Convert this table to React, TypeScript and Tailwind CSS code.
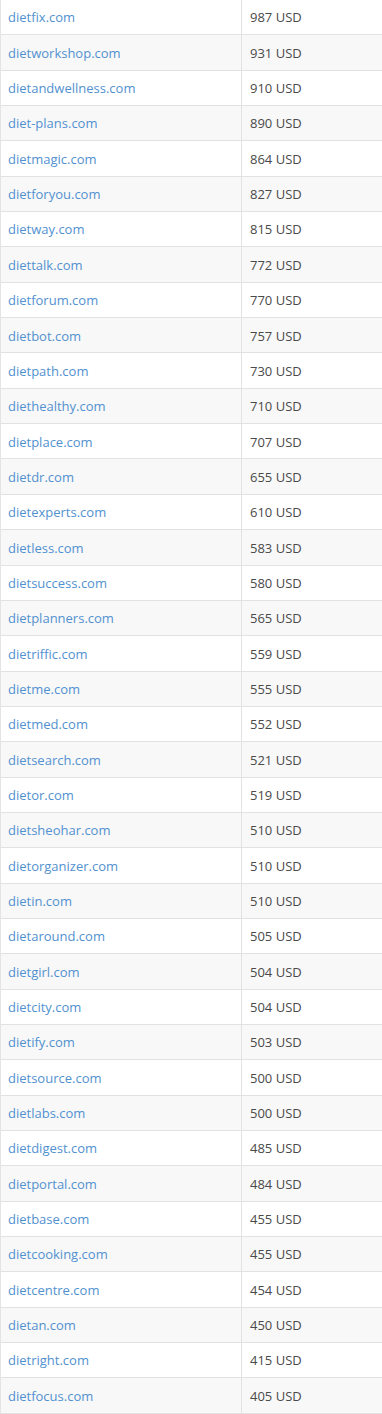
import React from "react";

const rows: [string, number][] = [
  ["dietfix.com", 987],
  ["dietworkshop.com", 931],
  ["dietandwellness.com", 910],
  ["diet-plans.com", 890],
  ["dietmagic.com", 864],
  ["dietforyou.com", 827],
  ["dietway.com", 815],
  ["diettalk.com", 772],
  ["dietforum.com", 770],
  ["dietbot.com", 757],
  ["dietpath.com", 730],
  ["diethealthy.com", 710],
  ["dietplace.com", 707],
  ["dietdr.com", 655],
  ["dietexperts.com", 610],
  ["dietless.com", 583],
  ["dietsuccess.com", 580],
  ["dietplanners.com", 565],
  ["dietriffic.com", 559],
  ["dietme.com", 555],
  ["dietmed.com", 552],
  ["dietsearch.com", 521],
  ["dietor.com", 519],
  ["dietsheohar.com", 510],
  ["dietorganizer.com", 510],
  ["dietin.com", 510],
  ["dietaround.com", 505],
  ["dietgirl.com", 504],
  ["dietcity.com", 504],
  ["dietify.com", 503],
  ["dietsource.com", 500],
  ["dietlabs.com", 500],
  ["dietdigest.com", 485],
  ["dietportal.com", 484],
  ["dietbase.com", 455],
  ["dietcooking.com", 455],
  ["dietcentre.com", 454],
  ["dietan.com", 450],
  ["dietright.com", 415],
  ["dietfocus.com", 405],
];

export default function App() {
  return (
    <div
      className="w-[382px] bg-white"
      style={{ fontFamily: '"Open Sans", "Noto Sans", sans-serif' }}
    >
      <div className="border-l border-[#e4e4e4]">
        {rows.map(([name, price], i) => (
          <div
            key={name}
            className={`flex h-[35.35px] border-b border-[#e2e2e2] text-[13px] ${
              i % 2 === 1 ? "bg-[#f8f8f8]" : "bg-white"
            }`}
          >
            <div className="flex w-[241px] items-center border-r border-[#e2e2e2] pl-[7px] pt-[2px]">
              <a className="text-[#5291d0] no-underline" href="#">
                {name}
              </a>
            </div>
            <div className="flex flex-1 items-center pl-[8px] pt-[2px] text-[#4a4a4a]">
              {price} USD
            </div>
          </div>
        ))}
      </div>
    </div>
  );
}
